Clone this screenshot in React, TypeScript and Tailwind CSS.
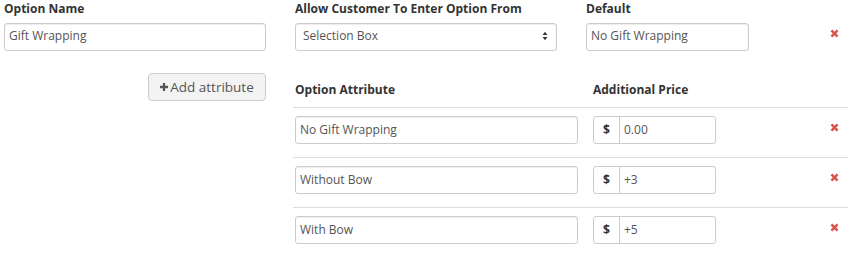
import React from "react";

const XIcon = () => (
  <svg width="9" height="9" viewBox="0 0 10 10" className="block">
    <path d="M1.6 1.6 L8.4 8.4 M8.4 1.6 L1.6 8.4" stroke="#d9534f" strokeWidth="2.8" strokeLinecap="butt" />
  </svg>
);

const inputCls =
  "h-[28px] border border-[#ccc] rounded-[3px] bg-white px-[4px] flex items-center text-[12px] text-[#555] shadow-[inset_0_1px_1px_rgba(0,0,0,0.075)]";

const rows = [
  { name: "No Gift Wrapping", price: "0.00" },
  { name: "Without Bow", price: "+3" },
  { name: "With Bow", price: "+5" },
];

export default function App() {
  return (
    <div className="w-[850px] h-[253px] bg-white font-['Open_Sans',sans-serif] text-[#333] overflow-hidden">
      {/* top row */}
      <div className="flex pl-[4px]">
        <div className="w-[262px]">
          <div className="h-[18px] leading-[18px] text-[12px] font-bold">Option Name</div>
          <div className={`${inputCls} mt-[5px] pb-[2px]`}>Gift Wrapping</div>
        </div>
        <div className="w-[262px] ml-[29px]">
          <div className="h-[18px] leading-[18px] text-[12px] font-bold">Allow Customer To Enter Option From</div>
          <div className={`${inputCls} mt-[5px] pb-[2px] justify-between pl-[7px] pr-[8px]`}>
            <span>Selection Box</span>
            <svg width="6" height="10" viewBox="0 0 6 10" className="block">
              <path d="M3 0.8 L5.4 4 L0.6 4 Z M3 9.2 L5.4 6 L0.6 6 Z" fill="#333" />
            </svg>
          </div>
        </div>
        <div className="w-[163px] ml-[29px]">
          <div className="h-[18px] leading-[18px] text-[12px] font-bold">Default</div>
          <div className={`${inputCls} mt-[5px] pb-[2px]`}>No Gift Wrapping</div>
        </div>
        <div className="ml-[81px] mt-[23px] h-[28px] flex items-center pb-[8px]">
          <XIcon />
        </div>
      </div>

      {/* bottom */}
      <div className="flex pl-[4px]">
        <div className="w-[262px] flex justify-end items-start">
          <button className="mt-[22px] h-[28px] w-[118px] border border-[#ccc] rounded-[4px] bg-[#f3f3f3] text-[13.5px] text-[#555] flex items-center justify-center gap-[2px]">
            <svg width="8" height="8" viewBox="0 0 9 9" className="block">
              <path d="M3.2 0 H5.8 V3.2 H9 V5.8 H5.8 V9 H3.2 V5.8 H0 V3.2 H3.2 Z" fill="#555" />
            </svg>
            <span>Add attribute</span>
          </button>
        </div>
        <div className="ml-[27px] w-[555px]">
          <div className="flex pt-[30px] pb-[8px] h-[56px] box-border text-[12px] font-bold leading-[18px]">
            <div className="ml-[2px] w-[298px]">Option Attribute</div>
            <div>Additional Price</div>
          </div>
          {rows.map((r) => (
            <div key={r.name} className="flex items-center border-t border-[#ddd] pt-[8px] pb-[13px]">
              <div className={`${inputCls} ml-[2px] w-[283px]`}>{r.name}</div>
              <div className="ml-[15px] w-[123px] h-[28px] flex border border-[#ccc] rounded-[3px] bg-white">
                <div className="w-[26px] border-r border-[#ccc] flex items-center justify-center text-[12px] font-bold text-[#333]">
                  $
                </div>
                <div className="flex-1 flex items-center px-[4px] text-[12px] text-[#555]">{r.price}</div>
              </div>
              <div className="ml-[114px] h-[28px] flex items-center pb-[6px]">
                <XIcon />
              </div>
            </div>
          ))}
        </div>
      </div>
    </div>
  );
}
